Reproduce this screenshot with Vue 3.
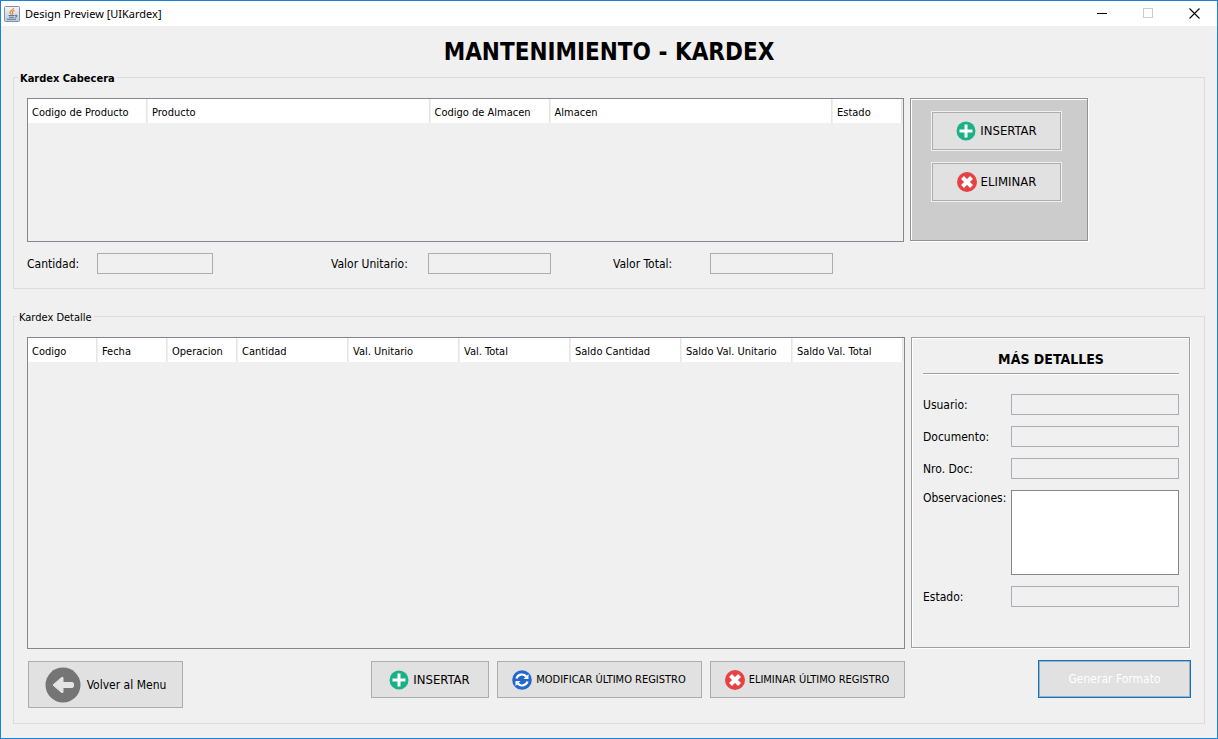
<script setup>
import { ref } from 'vue'

const headerColumns = [
  { label: 'Codigo de Producto', size: 'wide' },
  { label: 'Producto', size: 'fill' },
  { label: 'Codigo de Almacen', size: 'wide' },
  { label: 'Almacen', size: 'fill' },
  { label: 'Estado', size: 'narrow' }
]
const detailColumns = [
  { label: 'Codigo', size: 'narrow' },
  { label: 'Fecha', size: 'narrow' },
  { label: 'Operacion', size: 'narrow' },
  { label: 'Cantidad', size: 'fill' },
  { label: 'Val. Unitario', size: 'fill' },
  { label: 'Val. Total', size: 'fill' },
  { label: 'Saldo Cantidad', size: 'fill' },
  { label: 'Saldo Val. Unitario', size: 'fill' },
  { label: 'Saldo Val. Total', size: 'fill' }
]
const totals = ref({ cantidad: '', unitario: '', total: '' })
const detail = ref({ usuario: '', documento: '', nro: '', observaciones: '', estado: '' })
</script>

<template>
  <div class="window">
    <header class="titlebar">
      <svg class="app-icon" viewBox="0 0 16 16" aria-hidden="true">
        <defs>
          <linearGradient id="tile" x1="0" y1="0" x2="0" y2="1">
            <stop offset="0" stop-color="#f4f5f6" />
            <stop offset="1" stop-color="#bcc9d5" />
          </linearGradient>
        </defs>
        <rect x="0.5" y="0.5" width="15" height="15" rx="1" fill="url(#tile)" stroke="#7f91a3" />
        <path d="M9.500 2C10 4 5.500 4.500 6 6.500C6.200 7.300 7 7.800 7.300 8.500M10.500 4.500C8 5.500 8 6.200 8.700 7C9.100 7.600 8.800 8 8.300 8.500" fill="none" stroke="#ea8433" stroke-width="1.200" />
        <path d="M4.500 9.500H10.500M5 11.300H10M3 13.300H12M11 9.500C13.500 8.500 13.500 11 11 11.500" fill="none" stroke="#54789a" stroke-width="1.100" />
      </svg>
      <span class="caption">Design Preview [UIKardex]</span>
      <button class="winbtn" type="button" aria-label="Minimizar">
        <svg viewBox="0 0 11 11"><path d="M0 5.500H10" stroke="#000" /></svg>
      </button>
      <button class="winbtn" type="button" aria-label="Maximizar" disabled>
        <svg viewBox="0 0 11 11"><rect x="0.5" y="0.5" width="9" height="9" fill="none" stroke="#ccc" /></svg>
      </button>
      <button class="winbtn" type="button" aria-label="Cerrar">
        <svg viewBox="0 0 11 11"><path d="M0.500 0.500L10.500 10.500M10.500 0.500L0.500 10.500" stroke="#000" stroke-width="1.100" /></svg>
      </button>
    </header>

    <main class="content">
      <h1>MANTENIMIENTO - KARDEX</h1>

      <fieldset class="group">
        <legend class="strong">Kardex Cabecera</legend>
        <div class="row">
          <div class="grid-box short">
            <table>
              <thead>
                <tr><th v-for="c in headerColumns" :key="c.label" :class="c.size" scope="col">{{ c.label }}</th></tr>
              </thead>
            </table>
          </div>
          <div class="actions">
            <button class="btn large framed" type="button">
              <svg class="icon" viewBox="0 0 20 20" aria-hidden="true">
                <circle cx="10" cy="10" r="9.500" fill="#1ab187" />
                <path d="M10 3.500V16.500M3.500 10H16.500" stroke="#fff" stroke-width="3" />
              </svg>
              INSERTAR
            </button>
            <button class="btn large framed" type="button">
              <svg class="icon" viewBox="0 0 20 20" aria-hidden="true">
                <circle cx="10" cy="10" r="10" fill="#e54343" />
                <path d="M5.500 5.500L14.500 14.500M14.500 5.500L5.500 14.500" stroke="#fff" stroke-width="4" />
              </svg>
              ELIMINAR
            </button>
          </div>
        </div>
        <div class="totals">
          <label for="cantidad">Cantidad:</label>
          <input id="cantidad" v-model="totals.cantidad" type="text" readonly />
          <label class="third" for="unitario">Valor Unitario:</label>
          <input id="unitario" v-model="totals.unitario" type="text" readonly />
          <label class="fifth" for="total">Valor Total:</label>
          <input id="total" v-model="totals.total" type="text" readonly />
        </div>
      </fieldset>

      <fieldset class="group lower">
        <legend>Kardex Detalle</legend>
        <div class="row">
          <div class="grid-box tall">
            <table>
              <thead>
                <tr><th v-for="c in detailColumns" :key="c.label" :class="c.size" scope="col">{{ c.label }}</th></tr>
              </thead>
            </table>
          </div>
          <section class="details">
            <h2>MÁS DETALLES</h2>
            <div class="form">
              <label for="usuario">Usuario:</label>
              <input id="usuario" v-model="detail.usuario" type="text" readonly />
              <label for="documento">Documento:</label>
              <input id="documento" v-model="detail.documento" type="text" readonly />
              <label for="nro">Nro. Doc:</label>
              <input id="nro" v-model="detail.nro" type="text" readonly />
              <label class="top" for="observaciones">Observaciones:</label>
              <textarea id="observaciones" v-model="detail.observaciones"></textarea>
              <label for="estado">Estado:</label>
              <input id="estado" v-model="detail.estado" type="text" readonly />
            </div>
          </section>
        </div>
        <div class="footer">
          <button class="btn back" type="button">
            <svg class="icon-lg" viewBox="0 0 36 36" aria-hidden="true">
              <circle cx="18" cy="18" r="17.500" fill="#757575" />
              <path d="M8 18L16.500 10.500H18V15.500H27Q28.500 15.500 28.500 17V19Q28.500 20.500 27 20.500H18V25.500H16.500Z" fill="#e4e4e4" stroke="#e4e4e4" stroke-linejoin="round" />
            </svg>
            Volver al Menu
          </button>
          <div class="center">
            <button class="btn large insert" type="button">
              <svg class="icon" viewBox="0 0 20 20" aria-hidden="true">
                <circle cx="10" cy="10" r="9.500" fill="#1ab187" />
                <path d="M10 3.500V16.500M3.500 10H16.500" stroke="#fff" stroke-width="3" />
              </svg>
              INSERTAR
            </button>
            <button class="btn small modify" type="button">
              <svg class="icon" viewBox="0 0 20 20" aria-hidden="true">
                <circle cx="10" cy="10" r="9.800" fill="#2468cc" />
                <path d="M4.500 8.500C5.800 4.200 11.500 3.200 14.200 6.500M15.500 11.500C14.200 15.800 8.500 16.800 5.800 13.500" fill="none" stroke="#fff" stroke-width="2.200" />
                <path d="M16.500 4V9H11.500ZM3.500 16V11H8.500Z" fill="#fff" />
              </svg>
              MODIFICAR ÚLTIMO REGISTRO
            </button>
            <button class="btn small remove" type="button">
              <svg class="icon" viewBox="0 0 20 20" aria-hidden="true">
                <circle cx="10" cy="10" r="10" fill="#e54343" />
                <path d="M5.500 5.500L14.500 14.500M14.500 5.500L5.500 14.500" stroke="#fff" stroke-width="4" />
              </svg>
              ELIMINAR ÚLTIMO REGISTRO
            </button>
          </div>
          <button class="btn generate" type="button">Generar Formato</button>
        </div>
      </fieldset>
    </main>
  </div>
</template>

<style>
body {
  margin: 0;
  background: #f0f0f0;
}
</style>

<style scoped>
.window,
.window * {
  box-sizing: border-box;
}
.window {
  display: flex;
  flex-direction: column;
  min-height: 100vh;
  border: 1px solid #1883d7;
  background: #f0f0f0;
  color: #000;
  font-family: "DejaVu Sans Condensed", "Noto Sans", sans-serif;
  font-size: 12px;
  line-height: 14px;
}
button,
input,
textarea {
  margin: 0;
  font: inherit;
  color: inherit;
}
.titlebar {
  display: flex;
  align-items: center;
  height: 25px;
  padding-left: 3px;
  background: #fff;
}
.app-icon {
  width: 16px;
  height: 16px;
}
.caption {
  flex: 1;
  margin-left: 5px;
  font-family: "Noto Sans", sans-serif;
  font-size: 11px;
}
.winbtn {
  display: flex;
  align-items: center;
  justify-content: center;
  width: 46px;
  height: 25px;
  padding: 0;
  border: 0;
  background: none;
}
.winbtn svg {
  width: 11px;
  height: 11px;
}
.content {
  display: flex;
  flex: 1;
  flex-direction: column;
  padding: 11px 12px 14px;
}
h1 {
  margin: 0;
  font-size: 24px;
  line-height: 30px;
  text-align: center;
}
.group {
  min-width: 0;
  margin: 1px 0 0;
  padding: 12px 14px 14px 13px;
  border: 1px solid #dcdcdc;
}
.lower {
  flex: 1;
  margin-top: 18px;
}
legend {
  margin-left: -10px;
  padding: 4px 2px 0;
  font-size: 11px;
}
.strong {
  margin-left: -9px;
  font-weight: bold;
}
.row {
  display: flex;
  align-items: flex-start;
  gap: 6px;
}
.grid-box {
  flex: 1;
  min-width: 0;
  border: 1px solid #828790;
}
.short {
  min-height: 144px;
}
.tall {
  min-height: 312px;
}
table {
  width: 100%;
  border-collapse: separate;
  border-spacing: 0;
  table-layout: fixed;
}
th {
  height: 24px;
  padding: 3px 0 0 4px;
  border-right: 1px solid #f0f0f0;
  background: #fff;
  box-shadow: inset -1px 0 0 #e5e5e5;
  font-size: 11px;
  font-weight: normal;
  text-align: left;
  white-space: nowrap;
}
.wide {
  width: 120px;
}
.narrow {
  width: 70px;
}
.actions {
  display: flex;
  flex-direction: column;
  gap: 11px;
  width: 178px;
  min-height: 143px;
  margin-right: 102px;
  padding: 12px 20px;
  border: 1px solid #919191;
  background: #ccc;
  box-shadow: inset 1px 1px 0 #fff, 1px 1px 0 #fff;
}
.btn {
  display: flex;
  align-items: center;
  justify-content: center;
  gap: 4px;
  height: 37px;
  padding: 0;
  border: 1px solid #adadad;
  background: #e1e1e1;
  white-space: nowrap;
}
.large {
  font-size: 13px;
}
.framed {
  width: 131px;
  height: 40px;
  border-color: #f0f0f0;
  box-shadow: inset 0 0 0 1px #adadad;
}
.icon {
  flex: none;
  width: 20px;
  height: 20px;
}
.icon-lg {
  flex: none;
  width: 36px;
  height: 36px;
}
.totals {
  display: grid;
  grid-template-columns: 70px 116px 215px 123px 159px 123px;
  align-items: center;
  margin-top: 11px;
}
.third {
  padding-left: 118px;
}
.fifth {
  padding-left: 62px;
}
input {
  width: 100%;
  height: 21px;
  padding: 0 3px;
  border: 1px solid #abadb3;
  border-radius: 0;
  background: #f0f0f0;
}
textarea {
  display: block;
  width: 100%;
  height: 85px;
  padding: 2px;
  border: 1px solid #828790;
  border-radius: 0;
  background: #fff;
  resize: none;
}
.details {
  width: 279px;
  min-height: 311px;
  padding: 11px 10px 10px 11px;
  border: 1px solid #a0a0a0;
  box-shadow: inset 1px 1px 0 #fff, 1px 1px 0 #fff;
}
h2 {
  margin: 0;
  padding-bottom: 3px;
  border-bottom: 1px solid #a0a0a0;
  box-shadow: 0 1px 0 #fff;
  font-size: 14px;
  line-height: 21px;
  text-align: center;
}
.form {
  display: grid;
  grid-template-columns: 88px 1fr;
  row-gap: 11px;
  align-items: center;
  margin-top: 20px;
}
.top {
  align-self: start;
  padding-top: 1px;
}
.footer {
  display: flex;
  align-items: flex-start;
  justify-content: space-between;
  margin-top: 12px;
  padding-left: 1px;
}
.center {
  display: flex;
  gap: 8px;
  margin-left: 53px;
}
.back {
  width: 155px;
  height: 47px;
  gap: 6px;
}
.small {
  font-size: 11px;
}
.insert {
  width: 118px;
}
.modify {
  width: 205px;
}
.remove {
  width: 195px;
}
.generate {
  width: 151px;
  height: 36px;
  box-shadow: 0 0 0 1px #0078d7;
  color: #fff;
}
</style>
